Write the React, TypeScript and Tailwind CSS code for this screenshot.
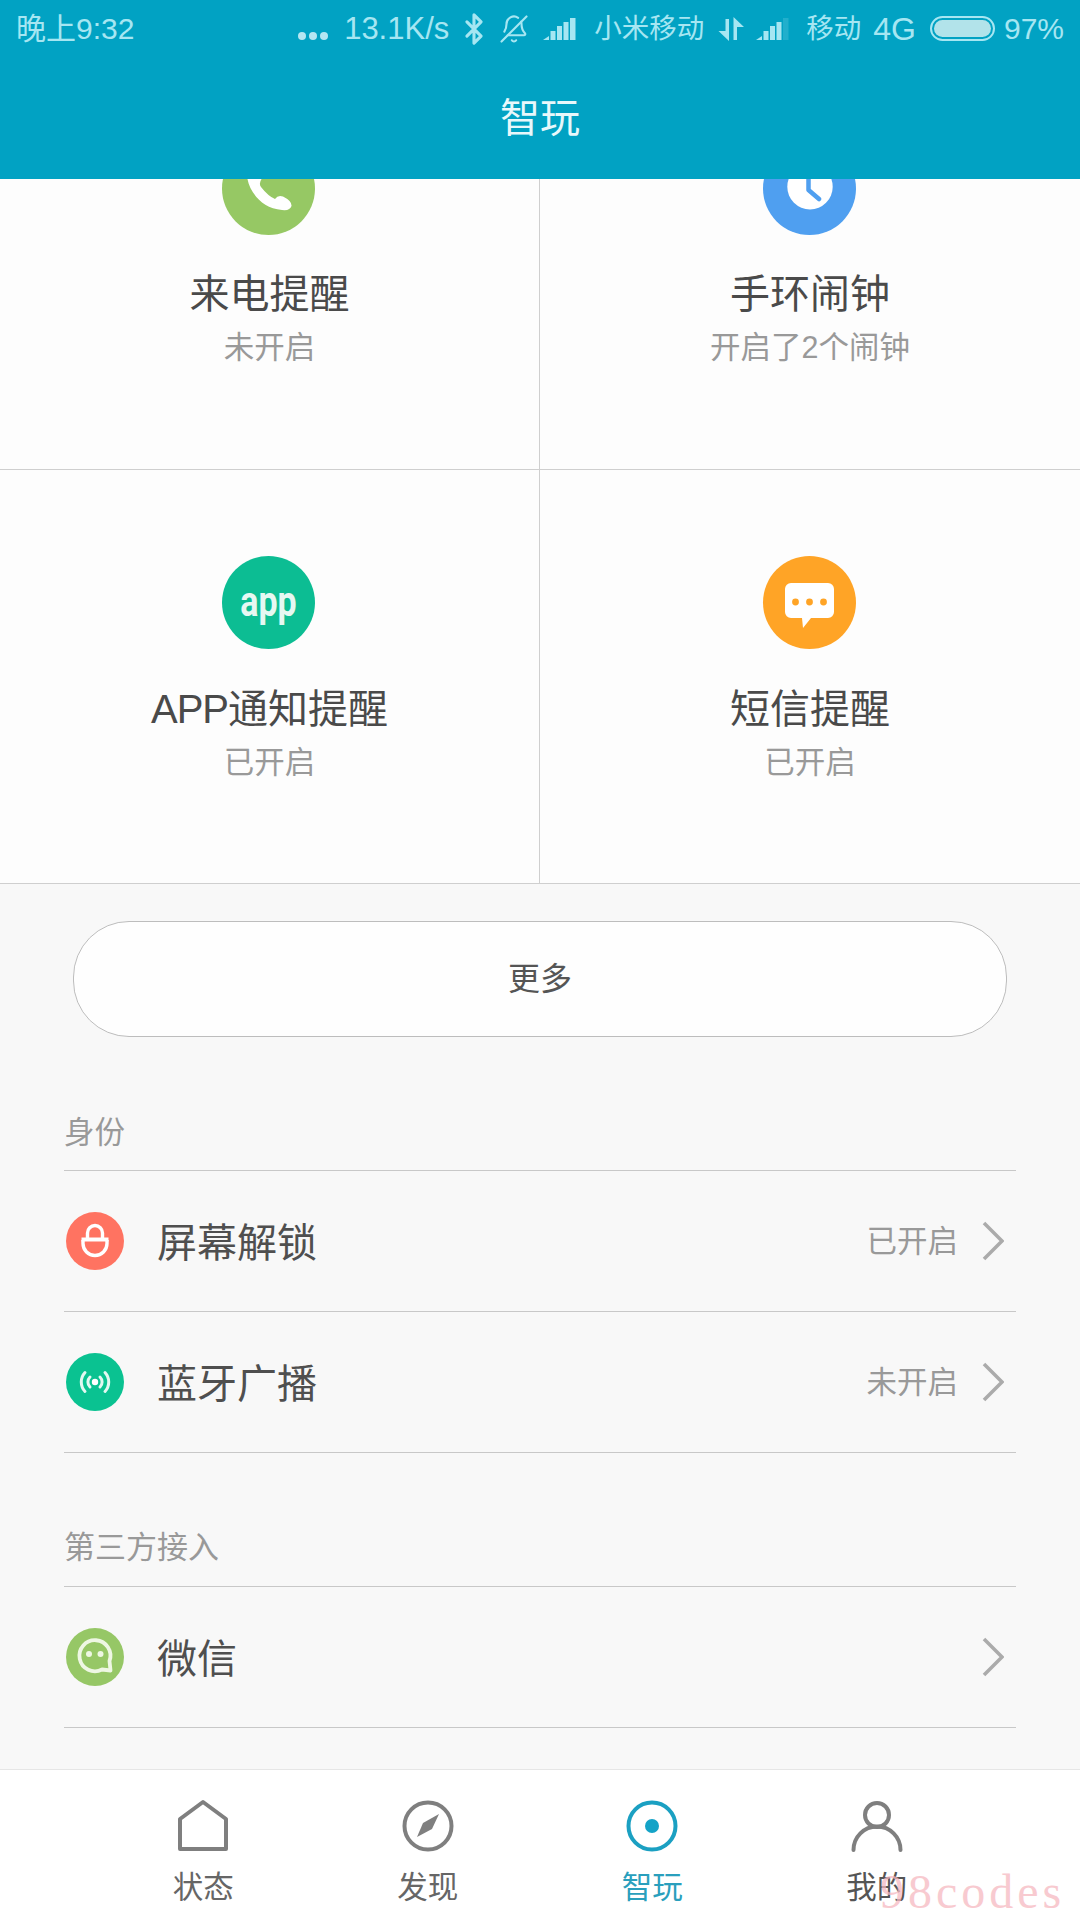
import React from "react";
import { Bluetooth, BellOff } from "lucide-react";

const FONT = "font-['Liberation_Sans','Noto_Sans_CJK_SC',sans-serif]";

function Signal({ dim = false }: { dim?: boolean }) {
  return (
    <svg width="34" height="24" viewBox="0 0 34 24" fill="#a6e6f2">
      <path d="M0 23 L6 19 V23 Z" />
      <rect x="7.5" y="14" width="5" height="9" />
      <rect x="14" y="9" width="5" height="14" />
      <rect x="20.5" y="5" width="5" height="18" />
      <rect x="27" y="1" width="5.5" height="22" opacity={dim ? 0.2 : 1} />
    </svg>
  );
}

function Arrows() {
  return (
    <svg width="26" height="26" viewBox="0 0 26 26" fill="#a6e6f2">
      <path d="M7.5 3 h3.5 V25 L0.5 15 h7 z" />
      <path d="M15.5 24 V1 L26 11 H19 V24 z" />
    </svg>
  );
}

function Battery() {
  return (
    <div className="w-[65px] h-[25px] rounded-full border-2 border-[#a6e6f2] p-[2px] flex">
      <div className="flex-1 rounded-full bg-[#b2e3ea]" />
    </div>
  );
}

function StatusBar() {
  return (
    <div className="h-[56px] pt-[1px] flex items-center pl-[16px] pr-[16px] text-[#a6e6f2] text-[31px] leading-none">
      <span className="text-[30px]">晚上9:32</span>
      <div className="flex-1" />
      <svg width="30" height="8" viewBox="0 0 30 8" fill="#b5e6f2" className="mt-[14px] mr-[16px]">
        <circle cx="4" cy="4" r="4" />
        <circle cx="15" cy="4" r="4" />
        <circle cx="26" cy="4" r="4" />
      </svg>
      <span className="mr-[15px]">13.1K/s</span>
      <Bluetooth size={34} strokeWidth={2.2} className="-mx-[7px] mr-[8px]" />
      <BellOff size={30} strokeWidth={1.7} className="mr-[14px] -scale-x-100" />
      <Signal />
      <span className="ml-[17px] mr-[14px] text-[27.5px]">小米移动</span>
      <Arrows />
      <div className="ml-[12px] mr-[16px]">
        <Signal dim />
      </div>
      <span className="text-[27.5px] mr-[12px]">移动</span>
      <span className="mr-[14px] text-[32px]">4G</span>
      <Battery />
      <span className="ml-[9px] text-[30px]">97%</span>
    </div>
  );
}

function Circle({ color, children, size = 93 }: { color: string; children?: React.ReactNode; size?: number }) {
  return (
    <div
      className="rounded-full flex items-center justify-center shrink-0"
      style={{ width: size, height: size, backgroundColor: color }}
    >
      {children}
    </div>
  );
}

function PhoneGlyph() {
  return (
    <svg width="93" height="93" viewBox="0 0 93 93" fill="#fff">
      <path d="M25 30 C24 44 36 66 60 68 Q68 69 69.5 64 Q70 59 61 54.5 Q56 52.5 53 57 Q46 54 39 45 Q36 41 41 35 L42 30 Z" />
    </svg>
  );
}

function ClockGlyph() {
  return (
    <svg width="93" height="93" viewBox="0 0 93 93">
      <circle cx="47" cy="44.7" r="22.7" fill="#fff" />
      <path
        d="M45.5 30 V48 L56 57"
        fill="none"
        stroke="#4f9ff0"
        strokeWidth="4.5"
        strokeLinecap="round"
        strokeLinejoin="round"
      />
    </svg>
  );
}

function MessageGlyph() {
  return (
    <svg width="93" height="93" viewBox="0 0 93 93">
      <path
        d="M28 27 H65 a6 6 0 0 1 6 6 V56 a6 6 0 0 1 -6 6 H48 L40 72 L39 62 H28 a6 6 0 0 1 -6 -6 V33 a6 6 0 0 1 6 -6 z"
        fill="#fff"
      />
      <circle cx="32.5" cy="46" r="3.4" fill="#ffa426" />
      <circle cx="46.5" cy="46" r="3.4" fill="#ffa426" />
      <circle cx="60.5" cy="46" r="3.4" fill="#ffa426" />
    </svg>
  );
}

function Tile({
  icon,
  title,
  sub,
  top,
  right,
}: {
  icon: React.ReactNode;
  title: React.ReactNode;
  sub: string;
  top?: boolean;
  right?: boolean;
}) {
  return (
    <div
      className={`flex flex-col items-center overflow-hidden border-b border-[#cfcfcf] ${
        right ? "" : "border-r"
      } ${top ? "h-[291px]" : "h-[414px]"}`}
    >
      <div className={`-ml-[2px] ${top ? "-mt-[37px]" : "mt-[86px]"}`}>{icon}</div>
      <div className={`text-[40px] leading-[56px] text-[#4a4a4a] ${top ? "mt-[31px]" : "mt-[32px]"}`}>{title}</div>
      <div className="mt-[5px] text-[30.5px] leading-[40px] text-[#999999]">{sub}</div>
    </div>
  );
}

function Chevron() {
  return (
    <svg width="22" height="40" viewBox="0 0 22 40" fill="none" stroke="#ababab" strokeWidth="3.6">
      <path d="M2 2 L20 20 L2 38" />
    </svg>
  );
}

function ListRow({ icon, title, value }: { icon: React.ReactNode; title: string; value?: string }) {
  return (
    <div className="h-[141px] flex items-center border-b border-[#c8c8c8] pl-[2px] pr-[12px]">
      <Circle color="transparent" size={58}>
        {icon}
      </Circle>
      <span className="ml-[33px] mt-[3px] text-[40px] leading-none text-[#4f4f4f]">{title}</span>
      <div className="flex-1" />
      {value && <span className="mr-[24px] mt-[1px] text-[30.5px] leading-none text-[#999999]">{value}</span>}
      <Chevron />
    </div>
  );
}

function LockIcon() {
  return (
    <svg width="58" height="58" viewBox="0 0 58 58">
      <circle cx="29" cy="29" r="29" fill="#ff7361" />
      <g fill="none" stroke="#fff" strokeWidth="3.4">
        <path d="M21.5 27 V21 a7.5 7.5 0 0 1 15 0 V27" />
        <path d="M15.5 27.5 H42.5" strokeWidth="4" />
        <path d="M17 28 V31.5 a12 12 0 0 0 24 0 V28" />
      </g>
    </svg>
  );
}

function BroadcastIcon() {
  return (
    <svg width="58" height="58" viewBox="0 0 58 58">
      <circle cx="29" cy="29" r="29" fill="#0ac291" />
      <circle cx="29" cy="29" r="3.2" fill="#fff" />
      <g fill="none" stroke="#e2f8f1" strokeWidth="3" strokeLinecap="round">
        <path d="M24 24 a7 7 0 0 0 0 10" />
        <path d="M34 24 a7 7 0 0 1 0 10" />
        <path d="M19 19.5 a14 14 0 0 0 0 19" />
        <path d="M39 19.5 a14 14 0 0 1 0 19" />
      </g>
    </svg>
  );
}

function WechatIcon() {
  return (
    <svg width="58" height="58" viewBox="0 0 58 58">
      <circle cx="29" cy="29" r="29" fill="#96c766" />
      <path
        d="M36 41.5 A15.5 15.5 0 1 1 43.5 33 L44.5 42.5 Z"
        fill="none"
        stroke="#eef7e4"
        strokeWidth="3.8"
        strokeLinejoin="round"
      />
      <circle cx="23" cy="26" r="3" fill="#eef7e4" />
      <circle cx="34.5" cy="26" r="3" fill="#eef7e4" />
    </svg>
  );
}

function NavItem({ icon, label, color }: { icon: React.ReactNode; label: string; color: string }) {
  return (
    <div className="flex flex-col items-center">
      {icon}
      <span className={`mt-[11px] text-[30.5px] leading-[40px] ${color}`}>{label}</span>
    </div>
  );
}

const GREY = "#7f7f7f";

export default function App() {
  return (
    <div className={`relative w-[1080px] h-[1920px] flex flex-col overflow-hidden bg-[#f8f8f8] ${FONT}`}>
      <header className="h-[179px] shrink-0 bg-[#01a2c3]">
        <StatusBar />
        <div className="h-[123px] flex items-center justify-center text-[40px] text-[#e8f8fb]">智玩</div>
      </header>

      <div className="grid grid-cols-2 shrink-0 bg-[#fdfdfd]">
        <Tile
          top
          icon={
            <Circle color="#96c864">
              <PhoneGlyph />
            </Circle>
          }
          title="来电提醒"
          sub="未开启"
        />
        <Tile
          top
          right
          icon={
            <Circle color="#4f9ff0">
              <ClockGlyph />
            </Circle>
          }
          title="手环闹钟"
          sub="开启了2个闹钟"
        />
        <Tile
          icon={
            <Circle color="#0cbd93">
              <span className="font-['Roboto'] font-bold text-[34px] leading-none text-[#e6f8f2] -mt-[4px] scale-y-[1.25]">app</span>
            </Circle>
          }
          title={
            <>
              <span className="tracking-[-1px]">APP</span>通知提醒
            </>
          }
          sub="已开启"
        />
        <Tile
          right
          icon={
            <Circle color="#ffa426">
              <MessageGlyph />
            </Circle>
          }
          title="短信提醒"
          sub="已开启"
        />
      </div>

      <div className="mx-[73px] mt-[37px] h-[116px] shrink-0 rounded-[56px] border border-[#bdbdbd] bg-[#fefefe] flex items-center justify-center text-[32px] text-[#555555]">
        更多
      </div>

      <div className="mx-[64px] shrink-0">
        <div className="mt-[75px] pb-[18px] text-[30.5px] leading-[40px] text-[#999999] border-b border-[#c8c8c8]">身份</div>
        <ListRow icon={<LockIcon />} title="屏幕解锁" value="已开启" />
        <ListRow icon={<BroadcastIcon />} title="蓝牙广播" value="未开启" />
        <div className="mt-[75px] pb-[18px] text-[31px] leading-[40px] text-[#999999] border-b border-[#c8c8c8]">第三方接入</div>
        <ListRow icon={<WechatIcon />} title="微信" />
      </div>

      <div className="flex-1" />

      <nav className="h-[151px] shrink-0 border-t border-[#e6e6e6] bg-white px-[91px] pt-[26px] grid grid-cols-4 items-start">
        <NavItem
          label="状态"
          color="text-[#666666]"
          icon={
            <svg width="60" height="60" viewBox="0 0 60 60" fill="none" stroke={GREY} strokeWidth="4" strokeLinejoin="round">
              <path d="M30 6 L53 23 V53 H7 V23 Z" />
            </svg>
          }
        />
        <NavItem
          label="发现"
          color="text-[#666666]"
          icon={
            <svg width="60" height="60" viewBox="0 0 60 60" fill="none">
              <circle cx="30" cy="30" r="23.5" stroke={GREY} strokeWidth="4" />
              <path d="M41 18 L34 33 L19 41 L25 27 Z" fill={GREY} />
            </svg>
          }
        />
        <NavItem
          label="智玩"
          color="text-[#2a9fbd]"
          icon={
            <svg width="60" height="60" viewBox="0 0 60 60" fill="none">
              <circle cx="30" cy="30" r="23.5" stroke="#1ba0c2" strokeWidth="4" />
              <circle cx="30" cy="30" r="7" fill="#14a3c7" />
            </svg>
          }
        />
        <NavItem
          label="我的"
          color="text-[#555555]"
          icon={
            <svg width="60" height="60" viewBox="0 0 60 60" fill="none" stroke={GREY} strokeWidth="4" strokeLinecap="round">
              <circle cx="30" cy="19" r="12" />
              <path d="M6.5 54 a23.5 23.5 0 0 1 47 0" />
            </svg>
          }
        />
      </nav>

      <div className="absolute left-[880px] top-[1864px] font-['Liberation_Serif',serif] text-[48px] leading-[56px] tracking-[4px] text-[#f6b9c1] opacity-75">
        98codes
      </div>
    </div>
  );
}
